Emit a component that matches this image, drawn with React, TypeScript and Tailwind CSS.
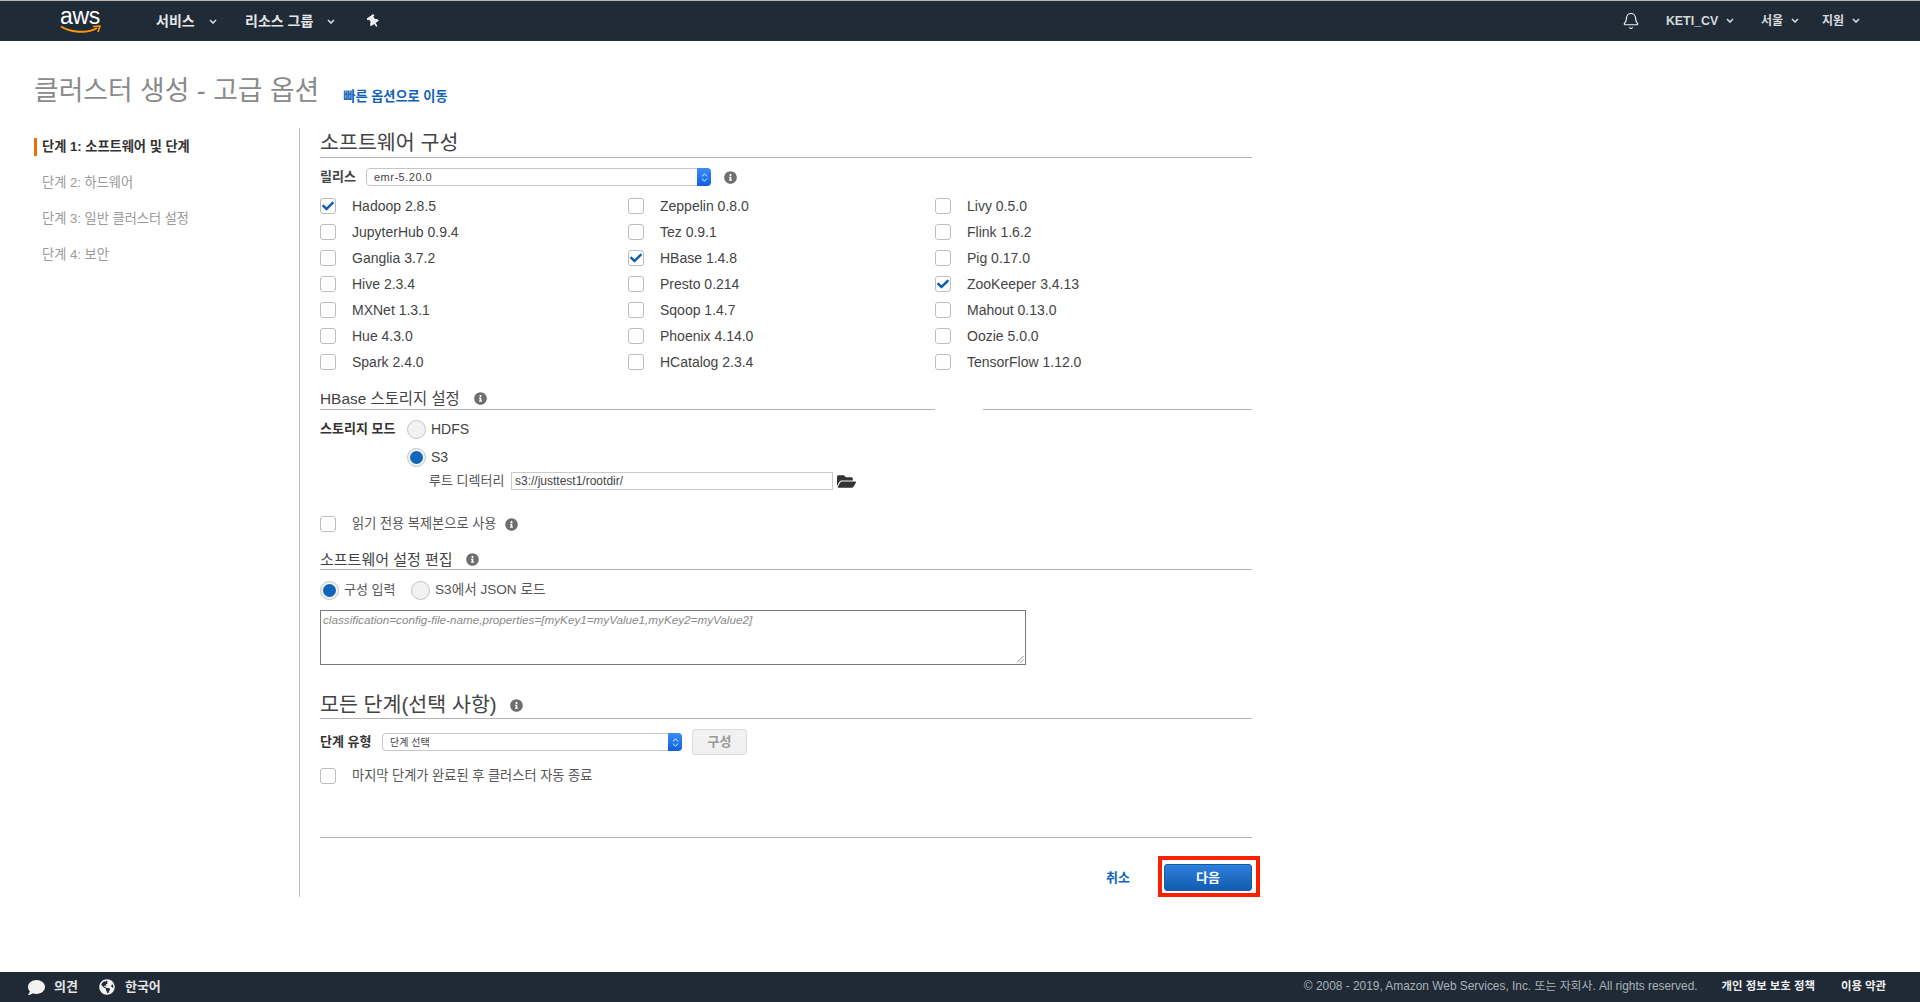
import { Bell, ChevronsUpDown } from "lucide-react";
import { FaCheck, FaComment, FaFolderOpen, FaGlobeAmericas, FaInfoCircle, FaThumbtack } from "react-icons/fa";

const column1 = [
  { name: "Hadoop 2.8.5", on: true },
  { name: "JupyterHub 0.9.4" },
  { name: "Ganglia 3.7.2" },
  { name: "Hive 2.3.4" },
  { name: "MXNet 1.3.1" },
  { name: "Hue 4.3.0" },
  { name: "Spark 2.4.0" },
];

const column2 = [
  { name: "Zeppelin 0.8.0" },
  { name: "Tez 0.9.1" },
  { name: "HBase 1.4.8", on: true },
  { name: "Presto 0.214" },
  { name: "Sqoop 1.4.7" },
  { name: "Phoenix 4.14.0" },
  { name: "HCatalog 2.3.4" },
];

const column3 = [
  { name: "Livy 0.5.0" },
  { name: "Flink 1.6.2" },
  { name: "Pig 0.17.0" },
  { name: "ZooKeeper 3.4.13", on: true },
  { name: "Mahout 0.13.0" },
  { name: "Oozie 5.0.0" },
  { name: "TensorFlow 1.12.0" },
];

const steps = ["단계 1: 소프트웨어 및 단계", "단계 2: 하드웨어", "단계 3: 일반 클러스터 설정", "단계 4: 보안"];

function Caret({ wide }: { wide?: boolean }) {
  return (
    <svg width="8" height="5" viewBox="0 0 8 5" className={wide ? "ml-[14px]" : "ml-[8px]"}>
      <path d="M1 1L4 4L7 1" fill="none" stroke="#d5dbdb" strokeWidth="1.6" />
    </svg>
  );
}

function Info({ size = 13 }: { size?: number }) {
  return <FaInfoCircle size={size} className="shrink-0 text-[#6f6f6f]" />;
}

function Checkbox({ on }: { on?: boolean }) {
  return (
    <span className="flex size-[16px] shrink-0 items-center justify-center rounded-[3px] border border-[#bdbdbd] bg-white">
      {on && <FaCheck size={12} className="text-[#0f5cb0]" />}
    </span>
  );
}

function Radio({ on }: { on?: boolean }) {
  return (
    <span className="flex size-[19px] shrink-0 items-center justify-center rounded-full border border-[#c4c4c4] bg-[#f2f2f2]">
      {on && <span className="size-[13px] rounded-full bg-[#1166bb]" />}
    </span>
  );
}

function CheckRow({ name, on }: { name: string; on?: boolean }) {
  return (
    <div className="flex h-[26px] items-center gap-[16px] text-[14px] text-[#444]">
      <Checkbox on={on} />
      <span>{name}</span>
    </div>
  );
}

function SelectBox({ text, className, textClass }: { text: string; className: string; textClass: string }) {
  return (
    <div className={`flex h-[18px] items-center justify-between rounded-[4px] border border-[#c6c6c6] bg-white pl-[7px] ${className}`}>
      <span className={`text-[#444] ${textClass}`}>{text}</span>
      <span className="-mr-px flex h-[18px] w-[14px] items-center justify-center rounded-r-[4px] bg-gradient-to-b from-[#3b8df5] to-[#0f5fe0]">
        <ChevronsUpDown size={11} className="text-white" />
      </span>
    </div>
  );
}

export default function App() {
  return (
    <div className="flex min-h-screen flex-col bg-white font-['Liberation_Sans','Noto_Sans_CJK_KR',sans-serif]">
      <header className="flex h-[41px] items-center border-t border-[#b5b5b5] bg-[#202b38] pl-[60px] pr-[60px] text-white">
        <div className="flex w-[96px] flex-col items-start">
          <span className="-mt-[3px] h-[20px] text-[23px] leading-[20px] tracking-[-0.3px]">aws</span>
          <svg width="41" height="9" viewBox="0 0 41 9" className="-mt-[1px]">
            <path d="M1 1.5C11 8 28 8.5 37 3" fill="none" stroke="#f90" strokeWidth="2" />
            <path d="M33 1.5L40 1L38 7" fill="none" stroke="#f90" strokeWidth="1.6" />
          </svg>
        </div>
        <span className="flex w-[89px] items-center whitespace-nowrap text-[14px] font-bold text-[#e6e6e6]">
          서비스
          <Caret wide />
        </span>
        <span className="flex w-[122px] items-center whitespace-nowrap text-[14px] font-bold text-[#e6e6e6]">
          리소스 그룹
          <Caret wide />
        </span>
        <FaThumbtack size={13} className="-rotate-[35deg] text-[#eee]" />
        <div className="ml-auto flex items-center text-[12px] font-bold text-[#d5dbdb]">
          <Bell size={18} strokeWidth={1.6} className="mr-[26px] text-[#f0f0f0]" />
          <span className="flex w-[95px] items-center text-[12.4px]">
            KETI_CV
            <Caret />
          </span>
          <span className="flex w-[61px] items-center">
            서울
            <Caret />
          </span>
          <span className="flex items-center">
            지원
            <Caret />
          </span>
        </div>
      </header>

      <div className="flex h-[87px] items-center pl-[34px] pt-[13px]">
        <h1 className="text-[26.8px] text-[#8a8a8a]">클러스터 생성 - 고급 옵션</h1>
        <a className="ml-[24px] mt-[11px] text-[13.2px] font-bold text-[#0f62b5]">빠른 옵션으로 이동</a>
      </div>

      <div className="flex pl-[34px]">
        <nav className="h-[769px] w-[266px] border-r border-[#bdbdbd] pt-[10px] text-[13.2px]">
          {steps.map((step, i) => (
            <div
              key={step}
              className={
                i === 0
                  ? "flex h-[18px] items-center border-l-[3px] border-[#e8700c] pl-[5px] font-bold text-[#333]"
                  : "mt-[18px] flex h-[18px] items-center pl-[8px] text-[#999]"
              }
            >
              {step}
            </div>
          ))}
        </nav>

        <main className="ml-[20px] w-[932px] text-[#444]">
          <h2 className="h-[30px] border-b border-[#b5b5b5] text-[20.6px] leading-[30px] text-[#444]">소프트웨어 구성</h2>

          <div className="mt-[10px] flex h-[18px] items-center">
            <span className="-mt-[1px] w-[46px] text-[13px] font-bold text-[#444]">릴리스</span>
            <SelectBox text="emr-5.20.0" className="w-[345px]" textClass="text-[11px] tracking-[0.5px]" />
            <span className="ml-[13px]">
              <Info />
            </span>
          </div>

          <div className="mt-[7px] grid grid-cols-[308px_307px_1fr]">
            <div>{column1.map((c) => <CheckRow key={c.name} {...c} />)}</div>
            <div>{column2.map((c) => <CheckRow key={c.name} {...c} />)}</div>
            <div>{column3.map((c) => <CheckRow key={c.name} {...c} />)}</div>
          </div>

          <div className="mt-[13px] flex h-[22px] gap-[48px]">
            <h3 className="flex w-[615px] items-start gap-[14px] border-b border-[#b5b5b5] text-[15.4px] leading-[22px] text-[#444]">
              HBase 스토리지 설정
              <span className="mt-[4px]">
                <Info />
              </span>
            </h3>
            <div className="w-[269px] border-b border-[#b5b5b5]" />
          </div>

          <div className="mt-[8px] flex h-[22px] items-center">
            <span className="w-[87px] text-[13px] font-bold text-[#333]">스토리지 모드</span>
            <span className="flex items-center gap-[5px] text-[14px]">
              <Radio />
              HDFS
            </span>
          </div>
          <div className="ml-[87px] mt-[6px] flex h-[22px] items-center gap-[5px] text-[14px]">
            <Radio on />
            S3
          </div>
          <div className="ml-[109px] mt-[4px] flex h-[18px] items-center text-[13px] text-[#555]">
            <span className="w-[82px]">루트 디렉터리</span>
            <div className="flex h-[18px] w-[322px] items-center border border-[#c9c9c9] pl-[3px] text-[12px] text-[#444]">s3://justtest1/rootdir/</div>
            <FaFolderOpen size={19} className="ml-[4px] text-[#333]" />
          </div>

          <div className="mt-[26px] flex h-[16px] items-center gap-[16px] text-[13.2px] text-[#555]">
            <Checkbox />
            <span>읽기 전용 복제본으로 사용</span>
            <span className="-ml-[7px]">
              <Info />
            </span>
          </div>

          <h3 className="mt-[16px] flex h-[22px] items-start gap-[13px] border-b border-[#b5b5b5] text-[15px] leading-[24px] text-[#444]">
            소프트웨어 설정 편집
            <span className="mt-[5px]">
              <Info />
            </span>
          </h3>

          <div className="mt-[10px] flex h-[20px] items-center text-[13px] text-[#555]">
            <Radio on />
            <span className="ml-[5px] w-[38px] whitespace-nowrap">구성 입력</span>
            <span className="ml-[29px]">
              <Radio />
            </span>
            <span className="ml-[5px] text-[13.6px]">S3에서 JSON 로드</span>
          </div>

          <div className="relative mt-[10px] h-[55px] w-[706px] border border-[#7a7a7a] px-[2px] text-[11.7px] italic text-[#8a8a8a]">
            classification=config-file-name,properties=[myKey1=myValue1,myKey2=myValue2]
            <svg width="8" height="8" viewBox="0 0 8 8" className="absolute bottom-[1px] right-[1px]">
              <path d="M1 7.5L7.5 1M4.5 7.5L7.5 4.5" stroke="#777" strokeWidth="0.8" />
            </svg>
          </div>

          <h2 className="mt-[25px] flex h-[29px] items-start gap-[13px] border-b border-[#b5b5b5] text-[20.6px] leading-[30px] text-[#444]">
            모든 단계(선택 사항)
            <span className="mt-[9px]">
              <Info />
            </span>
          </h2>

          <div className="mt-[10px] flex h-[26px] items-center">
            <span className="w-[62px] text-[13px] font-bold text-[#333]">단계 유형</span>
            <SelectBox text="단계 선택" className="w-[300px]" textClass="text-[10px]" />
            <button className="ml-[10px] h-[26px] w-[55px] rounded-[3px] border border-[#dcdcdc] bg-[#f1f1f1] text-[13px] font-bold text-[#999]">구성</button>
          </div>

          <div className="mt-[13px] flex h-[16px] items-center gap-[16px] text-[13.2px] text-[#555]">
            <Checkbox />
            <span>마지막 단계가 완료된 후 클러스터 자동 종료</span>
          </div>

          <div className="mt-[53px] border-t border-[#b5b5b5]" />

          <div className="mt-[26px] flex items-center justify-end">
            <a className="mr-[34px] text-[13px] font-bold text-[#0f62b5]">취소</a>
            <button className="relative h-[27px] w-[88px] rounded-[3px] border border-[#1259a8] bg-gradient-to-b from-[#2f7fdc] to-[#0f5cb0] text-[13px] font-bold text-white">
              다음
              <span className="absolute -left-[7px] -top-[9px] h-[41px] w-[102px] border-[4px] border-[#fa2000]" />
            </button>
          </div>
        </main>
      </div>

      <footer className="mt-auto flex h-[30px] items-center bg-[#1f2a36] pl-[28px] pr-[34px] text-white">
        <FaComment size={17} className="text-[#f2f2f2]" />
        <span className="ml-[9px] text-[13px] font-bold text-[#e4e4e4]">의견</span>
        <FaGlobeAmericas size={16} className="ml-[21px] text-[#f2f2f2]" />
        <span className="ml-[10px] text-[13px] font-bold text-[#e4e4e4]">한국어</span>
        <span className="ml-auto text-[11.9px] text-[#aab2b8]">© 2008 - 2019, Amazon Web Services, Inc. 또는 자회사. All rights reserved.</span>
        <span className="ml-[24px] text-[11.4px] font-bold text-[#eee]">개인 정보 보호 정책</span>
        <span className="ml-[26px] text-[11.4px] font-bold text-[#eee]">이용 약관</span>
      </footer>
    </div>
  );
}
